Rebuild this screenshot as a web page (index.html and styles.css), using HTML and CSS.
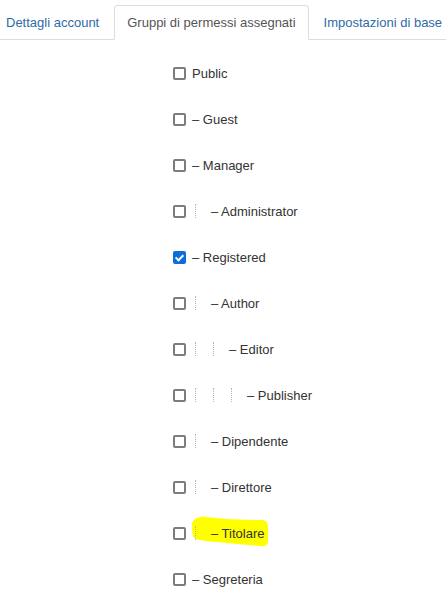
FILE: index.html
```html
<!DOCTYPE html>
<html lang="it">
<head>
<meta charset="utf-8">
<title>Gruppi di permessi assegnati</title>
<link rel="stylesheet" href="styles.css">
</head>
<body>
<ul class="tabs">
  <li class="tab"><a href="#">Dettagli account</a></li>
  <li class="tab active"><a href="#">Gruppi di permessi assegnati</a></li>
  <li class="tab"><a href="#">Impostazioni di base</a></li>
</ul>
<div class="groups">
  <label class="row"><input type="checkbox"><span class="name">Public</span></label>
  <label class="row"><input type="checkbox"><span class="name">– Guest</span></label>
  <label class="row"><input type="checkbox"><span class="name">– Manager</span></label>
  <label class="row"><input type="checkbox"><span class="gi"></span><span class="name">– Administrator</span></label>
  <label class="row"><input type="checkbox" checked><span class="name">– Registered</span></label>
  <label class="row"><input type="checkbox"><span class="gi"></span><span class="name">– Author</span></label>
  <label class="row"><input type="checkbox"><span class="gi"></span><span class="gi"></span><span class="name">– Editor</span></label>
  <label class="row"><input type="checkbox"><span class="gi"></span><span class="gi"></span><span class="gi"></span><span class="name">– Publisher</span></label>
  <label class="row"><input type="checkbox"><span class="gi"></span><span class="name">– Dipendente</span></label>
  <label class="row"><input type="checkbox"><span class="gi"></span><span class="name">– Direttore</span></label>
  <label class="row marked"><input type="checkbox">
    <svg class="highlight" width="80" height="32" viewBox="0 0 80 32" aria-hidden="true"><path d="M0 7 C2 2 8 0 14 1 C24 2 40 4 70 4 C75 4 76 8 76 12 L76 25 C76 29 73 31 68 30 C55 29 35 27 14 25 C6 24 2 23 1 20 C0 16 0 10 0 7 Z" fill="#ffff00"/></svg>
    <span class="gi"></span><span class="name">– Titolare</span></label>
  <label class="row"><input type="checkbox"><span class="name">– Segreteria</span></label>
</div>
</body>
</html>
```
FILE: styles.css
```css
html, body {
  margin: 0;
  padding: 0;
  background: #fff;
}
body {
  font-family: "Liberation Sans", Arial, sans-serif;
  font-size: 13px;
  color: #333;
}
.tabs {
  list-style: none;
  margin: 5px 0 0 -7px;
  padding: 0;
  display: flex;
  border-bottom: 1px solid #ddd;
}
.tab {
  margin: 0 2px -1px 0;
}
.tab a {
  display: block;
  padding: 8px 12px 7px;
  line-height: 18px;
  border: 1px solid transparent;
  border-radius: 4px 4px 0 0;
  color: #2f6ba7;
  text-decoration: none;
  white-space: nowrap;
}
.tab.active a {
  color: #555;
  background: #fff;
  border-color: #ddd #ddd transparent;
}
.groups {
  padding: 10px 0 0 173px;
}
.row {
  display: flex;
  align-items: center;
  height: 46px;
  position: relative;
}
.row input {
  -webkit-appearance: none;
  appearance: none;
  box-sizing: border-box;
  width: 13px;
  height: 13px;
  margin: 0 6px 0 0;
  flex: none;
  border: 2px solid #7d7d7d;
  border-radius: 2px;
  background: #fff;
  position: relative;
}
.row input:checked {
  background: #0f6ddb;
  border-color: #0f6ddb;
}
.row input:checked::after {
  content: "";
  position: absolute;
  left: 2px;
  top: 0px;
  width: 3px;
  height: 6px;
  border: solid #fff;
  border-width: 0 2px 2px 0;
  transform: rotate(45deg);
}
.gi {
  flex: none;
  width: 15px;
  height: 14px;
  margin-left: 3px;
  border-left: 1px dotted #b5b5b5;
  box-sizing: border-box;
  position: relative;
  z-index: 1;
}
.gi + .name {
  margin-left: 1px;
}
.name {
  position: relative;
  z-index: 1;
  white-space: nowrap;
}
.highlight {
  position: absolute;
  left: 19px;
  top: 6px;
}
```
